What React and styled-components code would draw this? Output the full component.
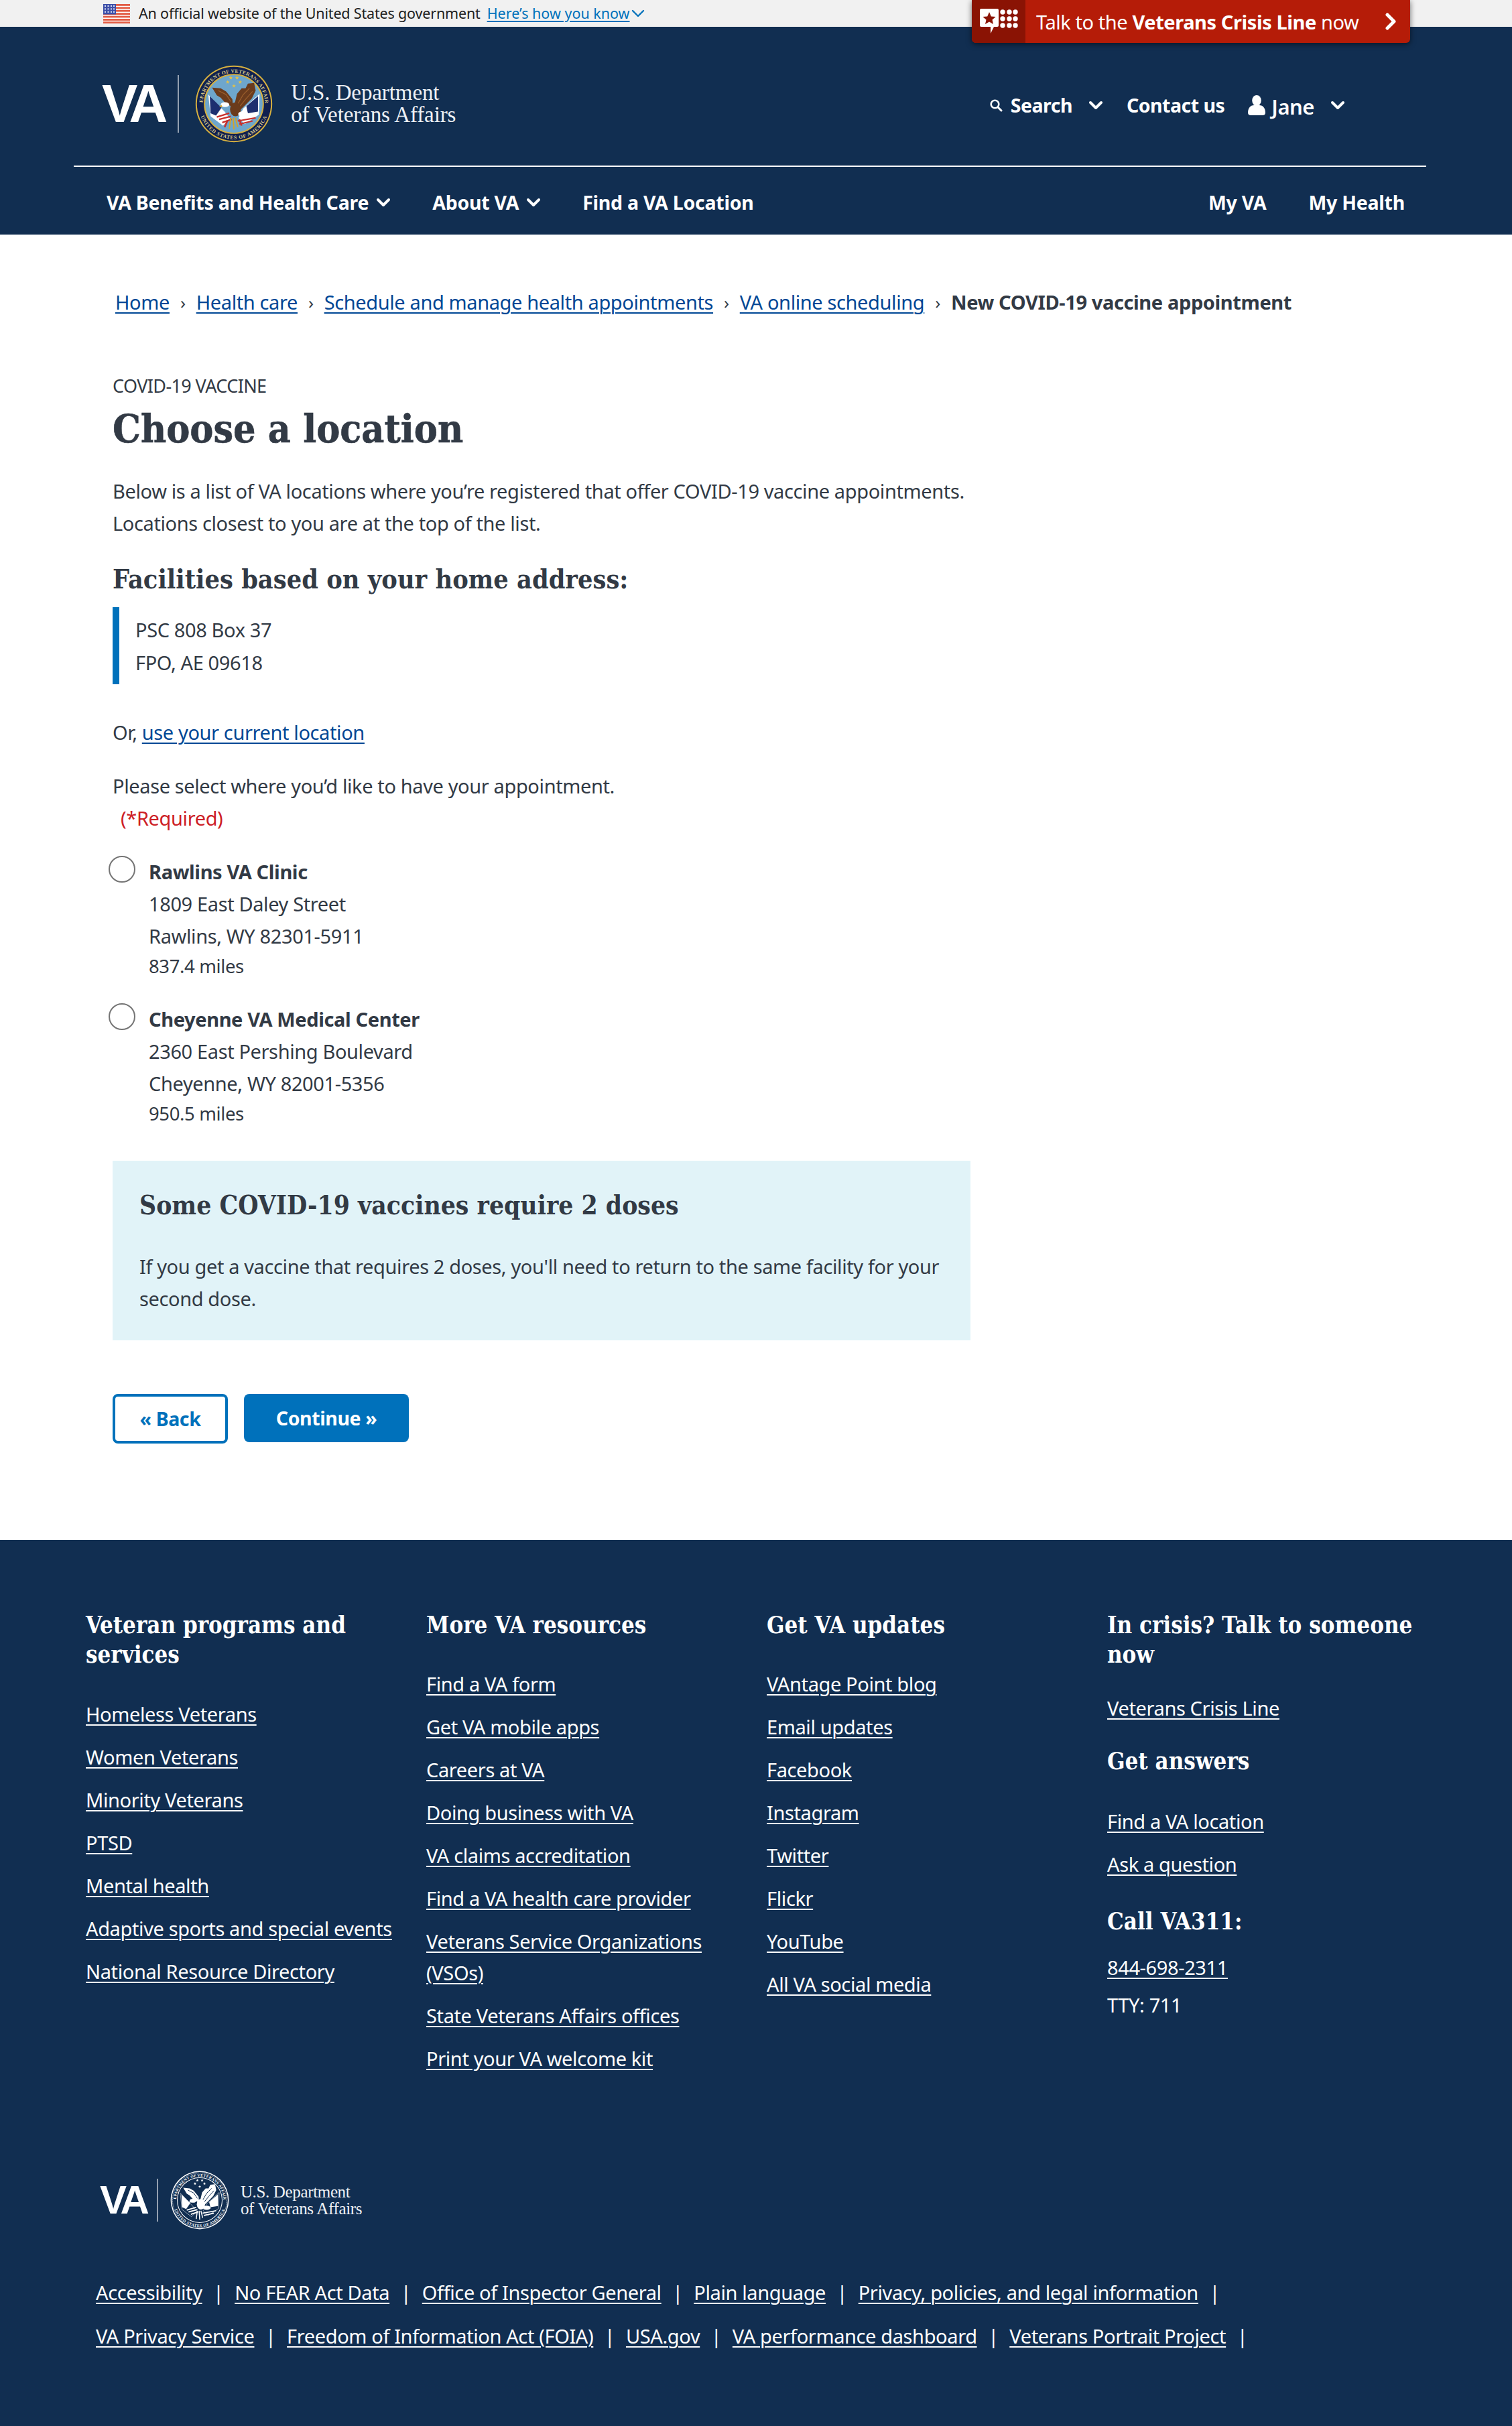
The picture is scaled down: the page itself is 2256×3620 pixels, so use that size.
import React from "react";
import styled, { createGlobalStyle } from "styled-components";

const NAVY = "#112e51";
const INK = "#323a45";
const SANS = `"Noto Sans", "Open Sans", sans-serif`;
const SLAB = `"DejaVu Serif Condensed", "DejaVu Serif", serif`;

const Global = createGlobalStyle`
  html, body { margin: 0; padding: 0; background: #fff; }
  body { font-family: ${SANS}; color: ${INK}; font-size: 29px; line-height: 48px; letter-spacing: -0.38px; }
  h1, h2, h3, p, ul { margin: 0; padding: 0; }
  ul { list-style: none; }
`;

const Page = styled.div`
  position: relative;
  width: 2256px;
  height: 3620px;
  overflow: hidden;
`;

/* ---------- gov banner ---------- */
const GovBanner = styled.div`
  height: 40px;
  background: #f1f1f1;
  display: flex;
  align-items: center;
  padding-left: 154px;
  font-size: 21.5px;
  line-height: 40px;
  letter-spacing: -0.17px;
  color: #212121;
`;
const GovText = styled.span`
  margin: 0 10px 0 13px;
`;
const GovLink = styled.a`
  color: #0071bb;
  letter-spacing: 0;
  margin-right: 2px;
  text-decoration: underline;
  text-underline-offset: 3px;
`;

const CrisisTab = styled.a`
  position: absolute;
  left: 1450px;
  top: 0;
  width: 654px;
  height: 64px;
  display: flex;
  align-items: center;
  background: #b51c08;
  color: #fff;
  border-radius: 0 0 6px 6px;
  box-shadow: 0 2px 8px rgba(0, 0, 0, 0.55);
  overflow: hidden;
  font-size: 29px;
  letter-spacing: -0.42px;
  b { font-weight: 700; }
`;
const CrisisIcon = styled.span`
  width: 80px;
  height: 64px;
  background: #8a1304;
  display: flex;
  align-items: center;
  justify-content: center;
  flex: none;
`;
const CrisisText = styled.span`
  margin-left: 16px;
  padding-top: 2px;
  flex: 1;
`;
const CrisisChevron = styled.svg`
  margin-right: 20px;
`;

/* ---------- header ---------- */
const Header = styled.header`
  background: ${NAVY};
  height: 310px;
  color: #fff;
`;
const HeaderTop = styled.div`
  height: 209px;
  box-sizing: border-box;
  margin: 0 128px 0 110px;
  border-bottom: 2px solid #fff;
  display: flex;
  align-items: center;
  justify-content: space-between;
  padding: 23px 122px 0 42px;
`;
const LogoRow = styled.div`
  display: flex;
  align-items: center;
`;
const VaMark = styled.span`
  font-family: "Liberation Sans", sans-serif;
  font-weight: 700;
  font-size: ${(p) => p.$size}px;
  line-height: 1;
  letter-spacing: ${(p) => p.$track}px;
  color: #fff;
`;
const LogoDivider = styled.span`
  width: 2px;
  height: ${(p) => p.$h}px;
  background: rgba(255, 255, 255, 0.55);
  margin: 0 ${(p) => p.$right}px 0 ${(p) => p.$left}px;
`;
const SealArt = styled.svg`
  flex: none;
  overflow: visible;
`;
const DeptName = styled.div`
  font-family: "Liberation Serif", serif;
  font-size: ${(p) => p.$size}px;
  line-height: ${(p) => p.$lh}px;
  letter-spacing: ${(p) => p.$track}px;
  margin-left: ${(p) => p.$gap}px;
  color: #eef1f5;
`;
const Utility = styled.div`
  display: flex;
  align-items: center;
  margin-top: 3px;
  font-weight: 700;
  font-size: 28.5px;
  letter-spacing: -0.5px;
`;
const UtilItem = styled.span`
  display: flex;
  align-items: center;
  margin-left: ${(p) => p.$ml || 0}px;
`;
const Label = styled.span`
  margin: 0 ${(p) => p.$mr || 0}px 0 ${(p) => p.$ml || 0}px;
  white-space: nowrap;
`;
const UserName = styled.span`
  margin: 0 25px 0 8px;
  padding-top: 5px;
  font-size: 31px;
  font-weight: 600;
  white-space: nowrap;
`;
const NavRow = styled.nav`
  height: 101px;
  padding-top: 5px;
  box-sizing: border-box;
  margin-left: 159px;
  margin-right: 160px;
  display: flex;
  align-items: center;
  justify-content: space-between;
  font-weight: 700;
  font-size: 28.5px;
  letter-spacing: -0.25px;
`;
const NavGroup = styled.div`
  display: flex;
  align-items: center;
  gap: ${(p) => p.$gap}px;
`;

/* ---------- main ---------- */
const Main = styled.main`
  padding: 77px 0 144px 168px;
`;
const Breadcrumbs = styled.div`
  display: flex;
  align-items: center;
  margin: 0 0 77px 4px;
  white-space: nowrap;
`;
const Crumb = styled.a`
  color: #004795;
  text-decoration: underline;
  text-underline-offset: 4px;
  text-decoration-thickness: 2px;
`;
const CrumbSep = styled.span`
  margin: 0 16px;
  font-size: 26px;
  color: #323a45;
`;
const CrumbNow = styled.strong`
  font-weight: 700;
`;
const Eyebrow = styled.div`
  font-size: 27px;
  letter-spacing: -0.6px;
`;
const Title = styled.h1`
  font-family: ${SLAB};
  font-weight: 700;
  font-size: 58.5px;
  line-height: 80px;
  letter-spacing: 0;
  -webkit-text-stroke: 0.6px ${INK};
  margin-bottom: 29px;
`;
const Prose = styled.p`
  width: 1300px;
`;
const SectionTitle = styled.h2`
  font-family: ${SLAB};
  font-weight: 700;
  font-size: ${(p) => p.$size || 39.3}px;
  line-height: 56px;
  letter-spacing: 0;
  margin: ${(p) => p.$mt ?? 31}px 0 0;
`;
const AddressBlock = styled.div`
  margin-top: 14px;
  border-left: 10px solid #0071bb;
  padding: 9px 0 8px 24px;
  line-height: 49px;
`;
const Para = styled.p`
  margin-top: ${(p) => p.$mt || 0}px;
`;
const TextLink = styled.a`
  color: #004795;
  text-decoration: underline;
  text-underline-offset: 4px;
  text-decoration-thickness: 2px;
`;
const Required = styled.div`
  color: #cd2026;
  margin-left: 12px;
`;
const Facilities = styled.ul`
  margin: 32px 0 0 -6px;
  display: flex;
  flex-direction: column;
  gap: 34px;
`;
const Facility = styled.li`
  display: flex;
`;
const Radio = styled.span`
  width: 40px;
  height: 40px;
  box-sizing: border-box;
  border: 2px solid #757575;
  border-radius: 50%;
  background: #fff;
  flex: none;
  margin-right: 20px;
`;
const FacilityName = styled.strong`
  display: block;
  font-weight: 700;
  line-height: 48px;
`;
const FacilityLine = styled.span`
  display: block;
`;
const Miles = styled.span`
  display: block;
  font-size: 27.5px;
  line-height: 42px;
`;
const InfoBox = styled.section`
  margin-top: 49px;
  width: 1280px;
  box-sizing: border-box;
  background: #e1f3f8;
  padding: 39px 40px 38px;
`;
const Buttons = styled.div`
  margin-top: 80px;
  display: flex;
  align-items: flex-start;
  gap: 24px;
`;
const Button = styled.button`
  font: 700 28.5px/1 ${SANS};
  letter-spacing: -0.4px;
  box-sizing: border-box;
  border-radius: 8px;
  width: ${(p) => p.$w}px;
  height: ${(p) => (p.$outline ? 74 : 72)}px;
  color: ${(p) => (p.$outline ? "#0071bb" : "#fff")};
  background: ${(p) => (p.$outline ? "#fff" : "#0071bb")};
  border: ${(p) => (p.$outline ? "4px solid #0071bb" : "0")};
  padding: 0;
`;

/* ---------- footer ---------- */
const Footer = styled.footer`
  background: ${NAVY};
  color: #fff;
  padding: 105px 0 110px 128px;
  height: 1322px;
  box-sizing: border-box;
`;
const FooterGrid = styled.div`
  display: grid;
  grid-template-columns: repeat(4, 508px);
  height: 836px;
`;
const FooterHeading = styled.h2`
  font-family: ${SLAB};
  font-weight: 700;
  font-size: 34.6px;
  line-height: 44px;
  letter-spacing: 0;
  width: 470px;
  margin-top: ${(p) => p.$mt || 0}px;
`;
const FooterList = styled.ul`
  margin-top: ${(p) => p.$mt ?? 42}px;
  display: flex;
  flex-direction: column;
  gap: 17px;
  width: ${(p) => p.$w || 440}px;
`;
const FooterLink = styled.a`
  color: #fff;
  text-decoration: underline;
  text-underline-offset: 4px;
  text-decoration-thickness: 2px;
`;
const FooterItem = styled.li`
  line-height: 47px;
`;
const Plain = styled.div`
  margin-top: ${(p) => p.$mt || 0}px;
  line-height: 48px;
`;
const BottomLogo = styled.div`
  display: flex;
  align-items: center;
  margin-left: 21px;
`;
const LegalRow = styled.div`
  display: flex;
  margin: ${(p) => p.$mt}px 0 0 15px;
  white-space: nowrap;
`;
const LegalSep = styled.span`
  margin: 0 16.5px;
`;

/* ---------- drawings ---------- */
const Chevron = ({ w = 20, h = 14, sw = 4, color = "#fff", style }) => (
  <svg width={w} height={h} viewBox="0 0 20 14" style={style} fill="none">
    <path d="M2 3 L10 11 L18 3" stroke={color} strokeWidth={sw} strokeLinecap="round" strokeLinejoin="round" />
  </svg>
);

const Flag = () => (
  <svg width="40" height="29" viewBox="0 0 40 29">
    <rect width="40" height="29" fill="#fff" />
    {[0, 4.4, 8.8, 13.2, 17.6, 22, 26.2].map((y) => (
      <rect key={y} y={y} width="40" height="2.8" fill="#e25b43" />
    ))}
    <rect y="0" width="19" height="15.5" fill="#3d4fa8" />
    {[3, 7.4, 11.8].map((y) =>
      [3, 7.5, 12, 16].map((x) => <rect key={x + "-" + y} x={x - 1} y={y - 1} width="2" height="2" fill="#dfe3f5" />)
    )}
  </svg>
);

const CrisisGlyph = () => (
  <svg width="58" height="38" viewBox="0 0 58 38">
    <path d="M3 0 H27 a2 2 0 0 1 2 2 V25 a2 2 0 0 1 -2 2 H22 L17 37 L17 27 H3 a2 2 0 0 1 -2 -2 V2 a2 2 0 0 1 2 -2 Z" fill="#fff" />
    <path d="M15 5 L17.8 11.4 L24.6 12 L19.5 16.5 L21 23 L15 19.6 L9 23 L10.5 16.5 L5.4 12 L12.2 11.4 Z" fill="#8a1304" />
    {[5, 15, 25].map((y) =>
      [35, 45, 54].map((x) => <circle key={x + "-" + y} cx={x} cy={y} r="3.7" fill="#fff" />)
    )}
  </svg>
);

const CrisisArrow = () => (
  <CrisisChevron width="18" height="26" viewBox="0 0 18 26" fill="none">
    <path d="M4 3 L14 13 L4 23" stroke="#fff" strokeWidth="5" strokeLinecap="round" strokeLinejoin="round" />
  </CrisisChevron>
);

const SearchIcon = () => (
  <svg width="20" height="20" viewBox="0 0 20 20" fill="none">
    <circle cx="8.5" cy="8.5" r="5.8" stroke="#fff" strokeWidth="2.6" />
    <path d="M13 13 L18 18" stroke="#fff" strokeWidth="3" strokeLinecap="round" />
  </svg>
);

const UserIcon = () => (
  <svg width="28" height="30" viewBox="0 0 28 30">
    <ellipse cx="14" cy="8" rx="6.8" ry="8" fill="#fff" />
    <path d="M1 26 C1 18 6 15 10 15 H18 C22 15 27 18 27 26 C27 29 25 30 23 30 H5 C3 30 1 29 1 26 Z" fill="#fff" />
  </svg>
);

const STAR = (cx, cy, r, fill) => {
  const pts = [];
  for (let i = 0; i < 10; i++) {
    const a = -Math.PI / 2 + (i * Math.PI) / 5;
    const q = i % 2 ? r * 0.42 : r;
    pts.push(`${(cx + q * Math.cos(a)).toFixed(2)},${(cy + q * Math.sin(a)).toFixed(2)}`);
  }
  return <polygon key={`${cx}-${cy}`} points={pts.join(" ")} fill={fill} />;
};

const Seal = ({ size, mono, id }) => {
  const ring = mono ? "#fff" : "#d8b13f";
  const band = mono ? NAVY : "#10204f";
  const disk = mono ? NAVY : "#6ea6cc";
  const ink = mono ? "#fff" : "#d9c98a";
  const brown = mono ? "#fff" : "#6b3b1c";
  const brown2 = mono ? NAVY : "#9a5e2c";
  const red = mono ? "#fff" : "#c8302c";
  const blue = mono ? "#fff" : "#1d2f6f";
  return (
    <SealArt width={size} height={size} viewBox="0 0 100 100">
      <circle cx="50" cy="50" r="49.3" fill={ring} />
      <circle cx="50" cy="50" r="47.6" fill={band} />
      {mono && <circle cx="50" cy="50" r="46" fill="none" stroke="#fff" strokeWidth="0.9" strokeDasharray="1 0.8" />}
      <circle cx="50" cy="50" r="38" fill={mono ? NAVY : ring} stroke={mono ? "#fff" : ring} strokeWidth="1.2" />
      <circle cx="50" cy="50" r="37" fill={disk} />
      <defs>
        <path id={`${id}-top`} d="M 10 50 A 40 40 0 0 1 90 50" />
        <path id={`${id}-bot`} d="M 4.5 50 A 45.5 45.5 0 0 0 95.5 50" />
      </defs>
      <text fontFamily="Liberation Serif, serif" fontWeight="700" fontSize="6.6" fill={ink} letterSpacing="0.3">
        <textPath href={`#${id}-top`} startOffset="50%" textAnchor="middle">DEPARTMENT OF VETERANS AFFAIRS</textPath>
      </text>
      <text fontFamily="Liberation Serif, serif" fontWeight="700" fontSize="6.6" fill={ink} letterSpacing="0.6">
        <textPath href={`#${id}-bot`} startOffset="50%" textAnchor="middle">UNITED STATES OF AMERICA</textPath>
      </text>
      {STAR(46, 16.5, 2.6, mono ? "#fff" : "#e2c04a")}
      {STAR(54, 16.5, 2.6, mono ? "#fff" : "#e2c04a")}
      {STAR(42, 22, 2.6, mono ? "#fff" : "#e2c04a")}
      {STAR(58, 22, 2.6, mono ? "#fff" : "#e2c04a")}
      {STAR(50, 27, 2.6, mono ? "#fff" : "#e2c04a")}
      {/* left flag */}
      <path d="M17 38 L38 60 L45 69 L36 78 L20 66 Z" fill={mono ? NAVY : "#fff"} stroke={mono ? "#fff" : "none"} strokeWidth="0.6" />
      <path d="M19 40 L34 55 L27 65 L20 62 Z" fill={blue} />
      <path d="M28 67 L44 62 M31 70 L46 66 M35 74 L47 70" stroke={red} strokeWidth="2" />
      {/* right flag */}
      <path d="M83 37 L62 56 L56 68 L64 76 L82 64 Z" fill={mono ? NAVY : "#fff"} stroke={mono ? "#fff" : "none"} strokeWidth="0.6" />
      <path d="M81 40 L66 53 L68 62 L81 60 Z" fill={blue} />
      <path d="M55 72 L78 68 M57 76 L74 72" stroke={red} strokeWidth="1.8" />
      {/* wings */}
      <path d="M22 29 L33 30 L40 34 L48 44 L49 54 L40 50 L33 42 L28 39 Z" fill={brown} />
      <path d="M76 23 L78 33 L73 43 L65 51 L55 61 L50 54 L54 37 L60 30 L65 30 L68 24 Z" fill={brown} />
      <path d="M30 33 L40 38 L46 47 M70 30 L62 38 L55 50 M74 34 L65 44 L57 54" stroke={brown2} strokeWidth="1.1" fill="none" />
      {/* body + head */}
      <ellipse cx="52" cy="57" rx="7" ry="9" fill={brown} />
      <ellipse cx="38.5" cy="51" rx="5.5" ry="3.2" fill="#fff" />
      <path d="M34 51 L31 54 L35 54 Z" fill={mono ? "#fff" : "#d7a428"} />
      <ellipse cx="62" cy="63" rx="6.5" ry="3.5" fill="#fff" />
      {/* knot */}
      <path d="M46 68 L44 82 M49 68 L50 83 M52 68 L55 80" stroke={mono ? "#fff" : "#d7a428"} strokeWidth="1.7" />
      {!mono && <path d="M42 71 L38 80 M57 70 L60 78" stroke={red} strokeWidth="2.2" />}
    </SealArt>
  );
};

/* ---------- data ---------- */
const footerCols = {
  programs: ["Homeless Veterans", "Women Veterans", "Minority Veterans", "PTSD", "Mental health", "Adaptive sports and special events", "National Resource Directory"],
  resources: ["Find a VA form", "Get VA mobile apps", "Careers at VA", "Doing business with VA", "VA claims accreditation", "Find a VA health care provider", "Veterans Service Organizations (VSOs)", "State Veterans Affairs offices", "Print your VA welcome kit"],
  updates: ["VAntage Point blog", "Email updates", "Facebook", "Instagram", "Twitter", "Flickr", "YouTube", "All VA social media"],
};
const legal1 = ["Accessibility", "No FEAR Act Data", "Office of Inspector General", "Plain language", "Privacy, policies, and legal information"];
const legal2 = ["VA Privacy Service", "Freedom of Information Act (FOIA)", "USA.gov", "VA performance dashboard", "Veterans Portrait Project"];

const FooterLinks = ({ items, mt, w }) => (
  <FooterList $mt={mt} $w={w}>
    {items.map((t) => (
      <FooterItem key={t}>
        <FooterLink>{t}</FooterLink>
      </FooterItem>
    ))}
  </FooterList>
);

const Legal = ({ items, mt }) => (
  <LegalRow $mt={mt}>
    {items.map((t) => (
      <React.Fragment key={t}>
        <FooterLink>{t}</FooterLink>
        <LegalSep>|</LegalSep>
      </React.Fragment>
    ))}
  </LegalRow>
);

const FacilityRow = ({ name, line1, line2, miles }) => (
  <Facility>
    <Radio />
    <div>
      <FacilityName>{name}</FacilityName>
      <FacilityLine>{line1}</FacilityLine>
      <FacilityLine>{line2}</FacilityLine>
      <Miles>{miles}</Miles>
    </div>
  </Facility>
);

export default function App() {
  return (
    <Page>
      <Global />
      <GovBanner>
        <Flag />
        <GovText>An official website of the United States government</GovText>
        <GovLink>Here’s how you know</GovLink>
        <Chevron w={20} h={14} sw={2.4} color="#0071bb" />
      </GovBanner>
      <CrisisTab>
        <CrisisIcon><CrisisGlyph /></CrisisIcon>
        <CrisisText>Talk to the <b>Veterans Crisis Line</b> now</CrisisText>
        <CrisisArrow />
      </CrisisTab>

      <Header>
        <HeaderTop>
          <LogoRow>
            <VaMark $size={80} $track={-7}>VA</VaMark>
            <LogoDivider $h={86} $left={22} $right={24} />
            <Seal size={116} id="top" />
            <DeptName $size={33} $lh={33} $track={-0.1} $gap={27}>
              U.S. Department<br />of Veterans Affairs
            </DeptName>
          </LogoRow>
          <Utility>
            <UtilItem>
              <SearchIcon />
              <Label $ml={12} $mr={25}>Search</Label>
              <Chevron w={20} h={14} />
            </UtilItem>
            <UtilItem $ml={36}><Label>Contact us</Label></UtilItem>
            <UtilItem $ml={34}>
              <UserIcon />
              <UserName>Jane</UserName>
              <Chevron w={20} h={14} />
            </UtilItem>
          </Utility>
        </HeaderTop>
        <NavRow>
          <NavGroup $gap={63}>
            <UtilItem><Label $mr={12}>VA Benefits and Health Care</Label><Chevron /></UtilItem>
            <UtilItem><Label $mr={12}>About VA</Label><Chevron /></UtilItem>
            <UtilItem><Label>Find a VA Location</Label></UtilItem>
          </NavGroup>
          <NavGroup $gap={63}>
            <Label>My VA</Label>
            <Label>My Health</Label>
          </NavGroup>
        </NavRow>
      </Header>

      <Main>
        <Breadcrumbs>
          <Crumb>Home</Crumb><CrumbSep>›</CrumbSep>
          <Crumb>Health care</Crumb><CrumbSep>›</CrumbSep>
          <Crumb>Schedule and manage health appointments</Crumb><CrumbSep>›</CrumbSep>
          <Crumb>VA online scheduling</Crumb><CrumbSep>›</CrumbSep>
          <CrumbNow>New COVID-19 vaccine appointment</CrumbNow>
        </Breadcrumbs>
        <Eyebrow>COVID-19 VACCINE</Eyebrow>
        <Title>Choose a location</Title>
        <Prose>
          Below is a list of VA locations where you’re registered that offer COVID-19 vaccine appointments.
          <br />
          Locations closest to you are at the top of the list.
        </Prose>
        <SectionTitle>Facilities based on your home address:</SectionTitle>
        <AddressBlock>
          PSC 808 Box 37
          <br />
          FPO, AE 09618
        </AddressBlock>
        <Para $mt={48}>Or, <TextLink>use your current location</TextLink></Para>
        <Para $mt={32}>Please select where you’d like to have your appointment.</Para>
        <Required>(*Required)</Required>
        <Facilities>
          <FacilityRow name="Rawlins VA Clinic" line1="1809 East Daley Street" line2="Rawlins, WY 82301-5911" miles="837.4 miles" />
          <FacilityRow name="Cheyenne VA Medical Center" line1="2360 East Pershing Boulevard" line2="Cheyenne, WY 82001-5356" miles="950.5 miles" />
        </Facilities>
        <InfoBox>
          <SectionTitle $mt={0} $size={38.7}>Some COVID-19 vaccines require 2 doses</SectionTitle>
          <Para $mt={39}>
            If you get a vaccine that requires 2 doses, you'll need to return to the same facility for your second dose.
          </Para>
        </InfoBox>
        <Buttons>
          <Button $outline $w={172}>« Back</Button>
          <Button $w={246}>Continue »</Button>
        </Buttons>
      </Main>

      <Footer>
        <FooterGrid>
          <div>
            <FooterHeading>Veteran programs and services</FooterHeading>
            <FooterLinks items={footerCols.programs} mt={43} w={490} />
          </div>
          <div>
            <FooterHeading>More VA resources</FooterHeading>
            <FooterLinks items={footerCols.resources} />
          </div>
          <div>
            <FooterHeading>Get VA updates</FooterHeading>
            <FooterLinks items={footerCols.updates} />
          </div>
          <div>
            <FooterHeading>In crisis? Talk to someone now</FooterHeading>
            <Plain $mt={34}><FooterLink>Veterans Crisis Line</FooterLink></Plain>
            <FooterHeading $mt={33}>Get answers</FooterHeading>
            <FooterLinks items={["Find a VA location", "Ask a question"]} mt={44} />
            <FooterHeading $mt={40}>Call VA311:</FooterHeading>
            <Plain $mt={23}><FooterLink>844-698-2311</FooterLink></Plain>
            <Plain $mt={8}>TTY: 711</Plain>
          </div>
        </FooterGrid>
        <BottomLogo>
          <VaMark $size={60} $track={-5}>VA</VaMark>
          <LogoDivider $h={64} $left={16} $right={18} />
          <Seal size={88} mono id="bot" />
          <DeptName $size={25} $lh={25} $track={-0.35} $gap={17}>
            U.S. Department<br />of Veterans Affairs
          </DeptName>
        </BottomLogo>
        <Legal items={legal1} mt={70} />
        <Legal items={legal2} mt={17} />
      </Footer>
    </Page>
  );
}
